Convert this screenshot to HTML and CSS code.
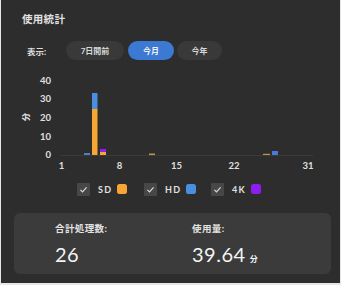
FILE: index.html
```html
<!DOCTYPE html>
<html lang="ja">
<head>
<meta charset="utf-8">
<link rel="stylesheet" href="styles.css">
</head>
<body>
<div class="card">
  <div class="title">使用統計</div>
  <div class="filter">
    <span class="filter-label">表示:</span>
    <span class="pill w58">7日間前</span>
    <span class="pill active w46">今月</span>
    <span class="pill w45">今年</span>
  </div>
  <svg class="chart" width="339" height="108" viewBox="1 66 339 108">
    <g class="ylab">
      <text x="51" y="83.5" text-anchor="end">40</text>
      <text x="51" y="102" text-anchor="end">30</text>
      <text x="51" y="121" text-anchor="end">20</text>
      <text x="51" y="140" text-anchor="end">10</text>
      <text x="51" y="158" text-anchor="end">0</text>
      <text x="26" y="120" text-anchor="middle" transform="rotate(-90 26 117)" class="unit">分</text>
    </g>
    <line x1="60" y1="155.5" x2="313" y2="155.5" stroke="#3a3a3a" stroke-width="1"/>
    <rect x="84" y="153" width="6" height="2" fill="#4a82c0"/>
    <rect x="92" y="109" width="5.5" height="46" fill="#f6a635"/>
    <rect x="92" y="93" width="5.5" height="16" fill="#4a8ee0"/>
    <rect x="100" y="152" width="6" height="3" fill="#f6a635"/>
    <rect x="100" y="149" width="6" height="3" fill="#8e1df0"/>
    <rect x="149" y="153.5" width="6" height="1.5" fill="#b89a40"/>
    <rect x="263" y="153.8" width="7" height="1.2" fill="#c29443"/>
    <rect x="272" y="151" width="6" height="4" fill="#4a78e0"/>
    <g class="xlab">
      <text x="61.5" y="169" text-anchor="middle">1</text>
      <text x="119.5" y="169" text-anchor="middle">8</text>
      <text x="176.5" y="169" text-anchor="middle">15</text>
      <text x="234" y="169" text-anchor="middle">22</text>
      <text x="308" y="169" text-anchor="middle">31</text>
    </g>
  </svg>
  <div class="legend">
    <div class="item">
      <span class="check"><svg width="13" height="13" viewBox="0 0 13 13"><path d="M3.4 6.8 L5.5 8.9 L9.6 4.3" fill="none" stroke="#d8d8d8" stroke-width="1.2"/></svg></span>
      <span class="ltext">SD</span>
      <span class="swatch sd"></span>
    </div>
    <div class="item">
      <span class="check"><svg width="13" height="13" viewBox="0 0 13 13"><path d="M3.4 6.8 L5.5 8.9 L9.6 4.3" fill="none" stroke="#d8d8d8" stroke-width="1.2"/></svg></span>
      <span class="ltext">HD</span>
      <span class="swatch hd"></span>
    </div>
    <div class="item">
      <span class="check"><svg width="13" height="13" viewBox="0 0 13 13"><path d="M3.4 6.8 L5.5 8.9 L9.6 4.3" fill="none" stroke="#d8d8d8" stroke-width="1.2"/></svg></span>
      <span class="ltext">4K</span>
      <span class="swatch k4"></span>
    </div>
  </div>
  <div class="stats">
    <div class="stat first">
      <div class="slabel">合計処理数:</div>
      <div class="svalue">26</div>
    </div>
    <div class="stat">
      <div class="slabel">使用量:</div>
      <div class="svalue">39.64<span class="sunit">分</span></div>
    </div>
  </div>
</div>
</body>
</html>
```
FILE: styles.css
```css
html, body {
  margin: 0;
  padding: 0;
  background: #e6e6e6;
}
body {
  font-family: "Lato", "Noto Sans CJK JP", sans-serif;
  color: #dcdcdc;
}
.card {
  width: 339px;
  height: 283px;
  margin-left: 1px;
  background: #2d2d2d;
  overflow: hidden;
}
.title {
  padding: 12px 0 0 21px;
  font-size: 10.5px;
  line-height: 14px;
  font-weight: 700;
  color: #e0e0e0;
  letter-spacing: 0.3px;
}
.filter {
  display: flex;
  align-items: center;
  margin-top: 15px;
  padding-left: 26px;
  height: 19px;
}
.filter-label {
  width: 39px;
  font-size: 8.5px;
  font-weight: 700;
  color: #dcdcdc;
}
.pill {
  display: flex;
  align-items: center;
  justify-content: center;
  height: 19px;
  border-radius: 10px;
  background: #393939;
  font-size: 8px;
  font-weight: 700;
  color: #d8d8d8;
  margin-right: 4px;
}
.pill.active {
  background: #3b79d2;
  color: #f2f2f2;
  margin-right: 3px;
}
.w58 { width: 58px; }
.w46 { width: 46px; }
.w45 { width: 45px; }
.chart {
  display: block;
  margin-top: 6px;
}
.chart text {
  font-family: "Lato", "Noto Sans CJK JP", sans-serif;
  font-weight: 700;
  font-size: 9.5px;
  fill: #e0e0e0;
}
.chart text.unit {
  font-size: 8.5px;
}
.legend {
  display: flex;
  margin-top: 8px;
  padding-left: 76px;
  height: 14px;
  align-items: center;
}
.item {
  display: flex;
  align-items: center;
  width: 67px;
}
.check {
  width: 13px;
  height: 13px;
  background: #474747;
  border-radius: 1px;
  display: block;
}
.check svg { display: block; }
.ltext {
  margin-left: 8px;
  font-size: 9px;
  font-weight: 700;
  letter-spacing: 1.2px;
  color: #e0e0e0;
}
.swatch {
  margin-left: 5px;
  width: 10px;
  height: 10px;
  border-radius: 2.5px;
}
.sd { background: #f6a635; }
.hd { background: #4a8ee0; }
.k4 { background: #8e1df0; }
.stats {
  display: flex;
  margin: 17px 0 0 13px;
  width: 317px;
  height: 61px;
  background: #3b3b3b;
  border-radius: 6px;
  box-sizing: border-box;
  padding: 9px 0 0 41px;
}
.stat {
  display: flex;
  flex-direction: column;
}
.stat.first { width: 137px; }
.slabel {
  font-size: 9.5px;
  line-height: 13px;
  font-weight: 700;
  color: #e2e2e2;
  letter-spacing: 0.4px;
}
.svalue {
  margin-top: 9px;
  font-size: 20px;
  line-height: 20px;
  font-weight: 400;
  color: #f4f4f4;
  letter-spacing: 0.5px;
}
.sunit {
  font-size: 8px;
  margin-left: 4px;
  font-weight: 700;
}
```
